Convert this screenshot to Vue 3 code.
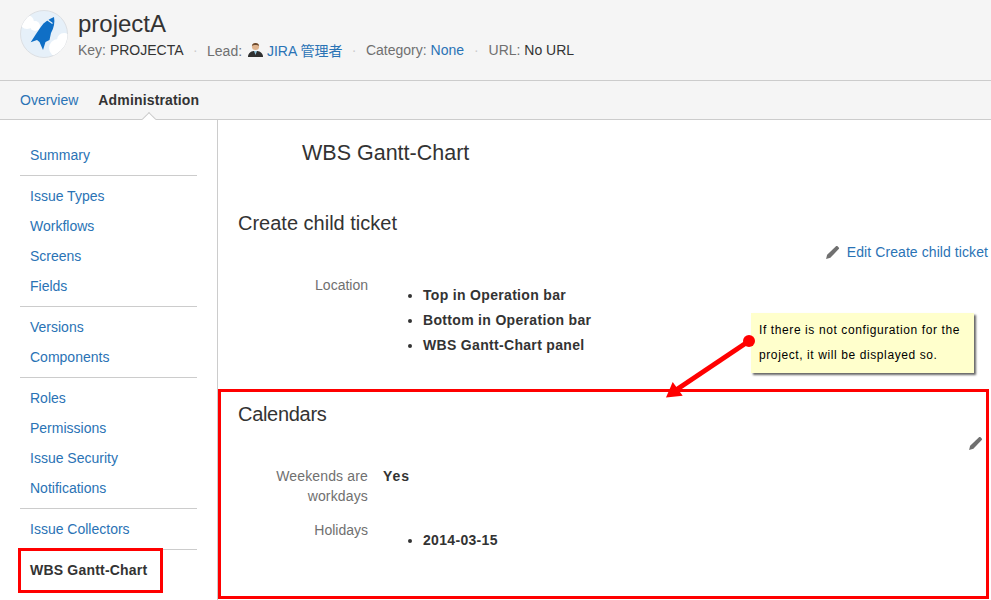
<script setup>
const groups = [
  ['Summary'],
  ['Issue Types', 'Workflows', 'Screens', 'Fields'],
  ['Versions', 'Components'],
  ['Roles', 'Permissions', 'Issue Security', 'Notifications'],
  ['Issue Collectors'],
]
const locations = ['Top in Operation bar', 'Bottom in Operation bar', 'WBS Gantt-Chart panel']
</script>

<template>
  <div class="page">
    <header class="head">
      <svg class="avatar" width="48" height="48" viewBox="0 0 48 48">
        <defs><clipPath id="c"><circle cx="24" cy="24" r="23.5" /></clipPath></defs>
        <circle cx="24" cy="24" r="23.5" fill="#e6f0f9" stroke="#dcdfe3" />
        <g clip-path="url(#c)" fill="#fff">
          <circle cx="7" cy="12" r="7" /><circle cx="15" cy="16" r="5" />
          <circle cx="38" cy="38" r="9" /><circle cx="44" cy="30" r="7" />
        </g>
        <path fill="#0f6fc6" d="M34 7 C35 12 34 18 31 23 L29.5 30 L25.5 32 L23 40 L19.5 32 L17 30 L10.7 32.3 L16 24 L20.8 17 C24 12 29 9 34 7 Z" />
        <path stroke="#e6f0f9" stroke-width="1.2" fill="none" d="M27.5 10 L32.5 13.5" />
      </svg>
      <div class="head-text">
        <h1 class="title">projectA</h1>
        <div class="meta">
          <span class="item">Key: <b>PROJECTA</b></span>
          <span class="sep">·</span>
          <span class="item">Lead:
            <svg class="user" width="15" height="16" viewBox="0 0 15 16">
              <path fill="#2f2f2f" d="M0 16 C0 12 3 10.5 5.5 10 L9.5 10 C12 10.5 15 12 15 16 Z" />
              <path fill="#8fc3dc" d="M6 10 L7.5 14 L9 10 Z" />
              <circle cx="7.5" cy="5.5" r="3.6" fill="#e0b48e" />
              <path fill="#6b4a2f" d="M3.9 5 C3.9 1 11.1 1 11.1 5 C9.5 3.6 5.5 3.6 3.9 5 Z" />
            </svg>
            <a class="link">JIRA 管理者</a></span>
          <span class="sep">·</span>
          <span class="item">Category: <a class="link">None</a></span>
          <span class="sep wide">·</span>
          <span class="item">URL: <b>No URL</b></span>
        </div>
      </div>
    </header>
    <nav class="tabs">
      <a class="link">Overview</a>
      <strong class="active">Administration</strong>
    </nav>
    <div class="body">
      <aside class="side">
        <ul v-for="(g, i) in groups" :key="i" class="group">
          <li v-for="t in g" :key="t"><a class="link">{{ t }}</a></li>
        </ul>
        <div class="current">WBS Gantt-Chart</div>
      </aside>
      <main class="main">
        <h2 class="page-title">WBS Gantt-Chart</h2>
        <section class="sec first">
          <h3>Create child ticket</h3>
          <div class="edit">
            <svg width="15" height="15" viewBox="0 0 14 14"><path fill="#707070" d="M10.5 1 Q11 .7 11.5 1 L13 2.5 Q13.3 3 13 3.5 L5 12 L1 13 L2 9 Z" /></svg>
            <a class="link">Edit Create child ticket</a>
          </div>
          <div class="row loc">
            <div class="label">Location</div>
            <ul class="vals">
              <li v-for="l in locations" :key="l">{{ l }}</li>
            </ul>
          </div>
        </section>
        <section class="sec second">
          <h3 class="cal">Calendars</h3>
          <div class="edit only">
            <svg width="15" height="15" viewBox="0 0 14 14"><path fill="#707070" d="M10.5 1 Q11 .7 11.5 1 L13 2.5 Q13.3 3 13 3.5 L5 12 L1 13 L2 9 Z" /></svg>
          </div>
          <div class="row week">
            <div class="label">Weekends are workdays</div>
            <div class="yes">Yes</div>
          </div>
          <div class="row hol">
            <div class="label">Holidays</div>
            <ul class="vals"><li>2014-03-15</li></ul>
          </div>
        </section>
      </main>
    </div>

    <div class="box big"></div>
    <div class="box small"></div>
    <div class="note">If there is not configuration for the<br />project, it will be displayed so.</div>
    <svg class="arrow" width="100" height="70" viewBox="0 0 100 70">
      <line x1="89" y1="11" x2="16" y2="60" stroke="#f00" stroke-width="5" />
      <circle cx="89" cy="11" r="6" fill="#f00" />
      <path fill="#f00" d="M6 67.5 L12.7 52 L22.7 65.7 Z" />
    </svg>
  </div>
</template>

<style>
html, body { margin: 0; background: #fff; }
</style>

<style scoped>
.page {
  position: relative;
  width: 991px;
  height: 600px;
  overflow: hidden;
  font-family: "Liberation Sans", Arial, "Noto Sans CJK JP", sans-serif;
  font-size: 14px;
  color: #333;
  background: #fff;
}
.link { color: #2a73b5; text-decoration: none; }
b { font-weight: 400; color: #333; }
.head {
  height: 81px;
  box-sizing: border-box;
  background: #f5f5f5;
  border-bottom: 1px solid #ccc;
  display: flex;
  padding: 10px 0 0 20px;
  gap: 10px;
}
.avatar { flex: none; }
.title {
  margin: 0;
  font-size: 24px;
  line-height: 28px;
  font-weight: 400;
  color: #333;
}
.meta {
  display: flex;
  align-items: center;
  margin-top: 2px;
  height: 20px;
  color: #707070;
  white-space: nowrap;
}
.sep { width: 23.5px; text-align: center; color: #ccc; }
.sep.wide { width: 24.5px; }
.user { vertical-align: -1px; margin: 0 4px 0 2px; }
.tabs {
  height: 39px;
  box-sizing: border-box;
  background: #f5f5f5;
  border-bottom: 1px solid #ccc;
  display: flex;
  align-items: center;
  gap: 20px;
  padding: 0 0 0 20px;
  position: relative;
  line-height: 38px;
}
.active { color: #333; position: relative; font-weight: 700; letter-spacing: 0.15px; }
.active::after {
  content: "";
  position: absolute;
  left: 46px;
  bottom: -5px;
  width: 10px;
  height: 10px;
  background: #fff;
  border: solid #ccc;
  border-width: 1px 0 0 1px;
  transform: rotate(45deg);
  box-sizing: border-box;
}
.body { display: flex; height: 480px; }
.side {
  width: 218px;
  flex: none;
  box-sizing: border-box;
  border-right: 1px solid #ccc;
  padding: 20px 20px 0;
}
.group {
  list-style: none;
  margin: 0 0 5px;
  padding: 0 0 5px;
  border-bottom: 1px solid #ccc;
}
.group li, .current {
  height: 30px;
  line-height: 30px;
  padding-left: 10px;
}
.current { font-weight: 700; color: #333; letter-spacing: 0.2px; }
.main { flex: 1; min-width: 0; padding-left: 20px; }
.page-title {
  margin: 19px 0 0 64px;
  font-size: 21.5px;
  line-height: 28px;
  font-weight: 400;
  color: #333;
}
.sec h3 {
  margin: 0;
  font-size: 20px;
  line-height: 28px;
  font-weight: 400;
  color: #333;
}
.sec h3.cal { letter-spacing: -0.3px; }
.first { margin-top: 42px; }
.edit {
  display: flex;
  justify-content: flex-end;
  align-items: center;
  gap: 7px;
  padding-right: 3px;
  height: 20px;
  margin-top: 5px;
  letter-spacing: 0.08px;
}
.edit.only { margin-top: 5px; padding-right: 8px; }
.row { display: flex; }
.label {
  width: 130px;
  flex: none;
  text-align: right;
  color: #707070;
  line-height: 20px;
}
.week .label { letter-spacing: 0.15px; }
.loc { margin-top: 13px; }
.vals {
  margin: 0;
  padding: 8px 0 0 55px;
  font-weight: 700;
  color: #333;
  letter-spacing: 0.32px;
}
.vals li { line-height: 25px; }
.second { margin-top: 42px; }
.week { margin-top: 13px; }
.yes { margin-left: 15px; font-weight: 700; line-height: 20px; letter-spacing: 1px; }
.hol { margin-top: 14px; }
.box { position: absolute; box-sizing: border-box; border: 3px solid #f00; }
.big { left: 218px; top: 389px; width: 771px; height: 210px; }
.small { left: 18px; top: 548px; width: 145px; height: 45px; }
.note {
  position: absolute;
  left: 751px;
  top: 313px;
  width: 223px;
  height: 60px;
  box-sizing: border-box;
  padding: 5px 0 0 8px;
  background: #ffffcc;
  box-shadow: 2px 2px 2px #666;
  font-size: 12px;
  line-height: 25px;
  color: #000;
  letter-spacing: 0.6px;
  white-space: nowrap;
}
.arrow { position: absolute; left: 660px; top: 330px; }
</style>
